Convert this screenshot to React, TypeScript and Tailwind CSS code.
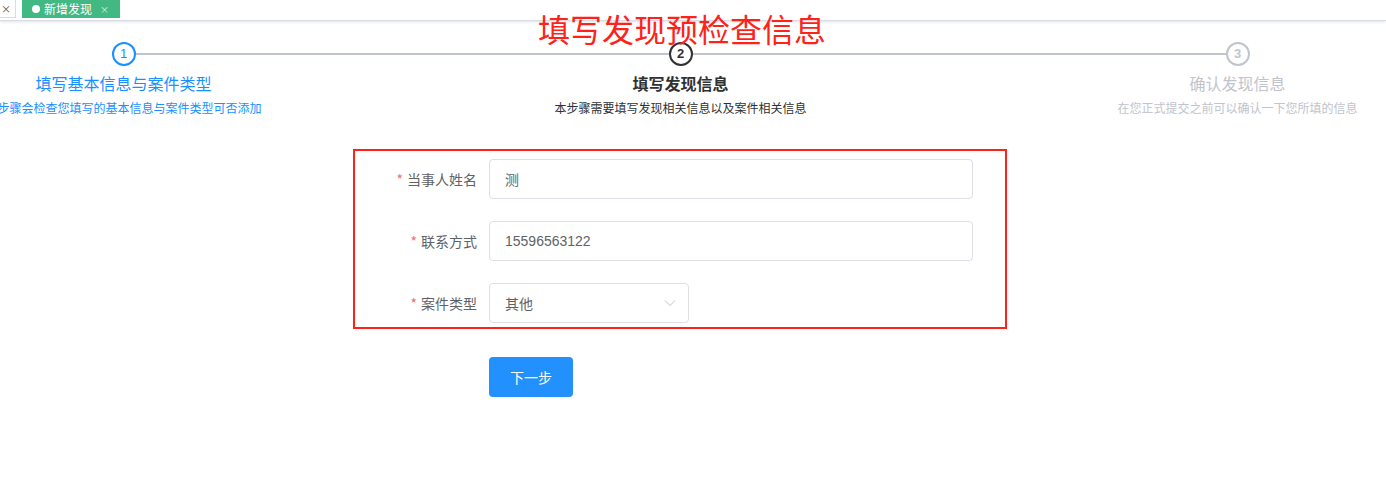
import React from "react";

type StepState = "finish" | "process" | "wait";

interface Step {
  title: string;
  description: string;
  state: StepState;
}

const STEPS: Step[] = [
  {
    title: "填写基本信息与案件类型",
    description: "本步骤会检查您填写的基本信息与案件类型可否添加",
    state: "finish",
  },
  {
    title: "填写发现信息",
    description: "本步骤需要填写发现相关信息以及案件相关信息",
    state: "process",
  },
  {
    title: "确认发现信息",
    description: "在您正式提交之前可以确认一下您所填的信息",
    state: "wait",
  },
];

const CIRCLE: Record<StepState, string> = {
  finish: "border-[#1890ff] text-[#1890ff] font-medium",
  process: "border-[#303133] text-[#303133] font-bold",
  wait: "border-[#c0c4cc] text-[#c0c4cc] font-bold",
};

const TITLE: Record<StepState, string> = {
  finish: "text-[#1890ff]",
  process: "text-[#303133] font-bold",
  wait: "text-[#c0c4cc]",
};

const DESC: Record<StepState, string> = {
  finish: "text-[#1890ff]",
  process: "text-[#303133]",
  wait: "text-[#c0c4cc]",
};

function Steps() {
  return (
    <div className="flex w-[1671px] -ml-[155px] mt-[21px]">
      {STEPS.map((step, i) => (
        <div key={step.title} className="w-[557px] flex flex-col items-center">
          <div className="flex w-full items-center h-6">
            <div
              className={`flex-1 h-[2px] ${i === 0 ? "bg-transparent" : "bg-[#c0c4cc]"}`}
            />
            <div
              className={`w-6 h-6 rounded-full border-2 bg-white flex items-center justify-center text-[13px] font-['Liberation_Sans',sans-serif] ${CIRCLE[step.state]}`}
            >
              {i + 1}
            </div>
            <div
              className={`flex-1 h-[2px] ${i === STEPS.length - 1 ? "bg-transparent" : "bg-[#c0c4cc]"}`}
            />
          </div>
          <div className={`mt-[5px] text-[16px] leading-6 whitespace-nowrap ${TITLE[step.state]}`}>
            {step.title}
          </div>
          <div className={`mt-[4px] text-[12px] leading-[18px] whitespace-nowrap ${DESC[step.state]}`}>
            {step.description}
          </div>
        </div>
      ))}
    </div>
  );
}

function FormRow({
  label,
  last,
  children,
}: {
  label: string;
  last?: boolean;
  children: React.ReactNode;
}) {
  return (
    <div className={`flex items-center h-10 ${last ? "" : "mb-[22px]"}`}>
      <label className="w-[134px] pr-3 text-right text-[14px] text-[#606266] whitespace-nowrap">
        <span className="text-[#f56c6c] mr-[4px]">*</span>
        {label}
      </label>
      {children}
    </div>
  );
}

export default function App() {
  return (
    <div className="relative w-[1386px] h-[493px] overflow-hidden bg-white font-['Noto_Sans_CJK_SC','Liberation_Sans',sans-serif]">
      {/* tags bar */}
      <div className="h-[21px] flex items-start gap-[6px] border-b border-[#d8dce5] shadow-[0_1px_3px_rgba(0,0,0,0.12)]">
        <div className="h-[18px] w-[16px] border border-l-0 border-t-0 border-[#d8dce5] text-[10px] leading-[17px] text-[#495060] pl-[1px]">
          ×
        </div>
        <div className="h-[18px] w-[98px] bg-[#42b983] flex items-center pl-[10px] text-white text-[12px]">
          <span className="w-2 h-2 rounded-full bg-white mr-[4px]" />
          <span className="leading-none">新增发现</span>
          <span className="ml-[8px] text-[9px] leading-none text-white/80">×</span>
        </div>
      </div>

      <Steps />

      {/* form */}
      <div className="ml-[353px] mt-[32px] w-[654px] border-2 border-[#ff2219] pt-[8px] pb-[4px]">
        <FormRow label="当事人姓名">
          <div className="w-[484px] h-10 border border-[#dcdfe6] rounded-[4px] px-[15px] flex items-center text-[14px] text-[#606266]">
            测
          </div>
        </FormRow>
        <FormRow label="联系方式">
          <div className="w-[484px] h-10 border border-[#dcdfe6] rounded-[4px] px-[15px] flex items-center text-[14px] text-[#606266] font-['Liberation_Sans',sans-serif]">
            15596563122
          </div>
        </FormRow>
        <FormRow label="案件类型" last>
          <div className="w-[200px] h-10 border border-[#dcdfe6] rounded-[4px] pl-[15px] pr-[12px] flex items-center justify-between text-[14px] text-[#606266]">
            <span>其他</span>
            <svg width="12" height="8" viewBox="0 0 12 8" fill="none">
              <path d="M1 1.5 6 6.5 11 1.5" stroke="#c0c4cc" strokeWidth="1" />
            </svg>
          </div>
        </FormRow>
      </div>

      <button className="ml-[489px] mt-[28px] w-[84px] h-10 rounded-[4px] bg-[#2391fd] text-white text-[14px]">
        下一步
      </button>

      {/* annotation title */}
      <div className="absolute left-[538px] top-[8px] text-[32px] leading-[40px] text-[#ff2219] whitespace-nowrap">
        填写发现预检查信息
      </div>
    </div>
  );
}
